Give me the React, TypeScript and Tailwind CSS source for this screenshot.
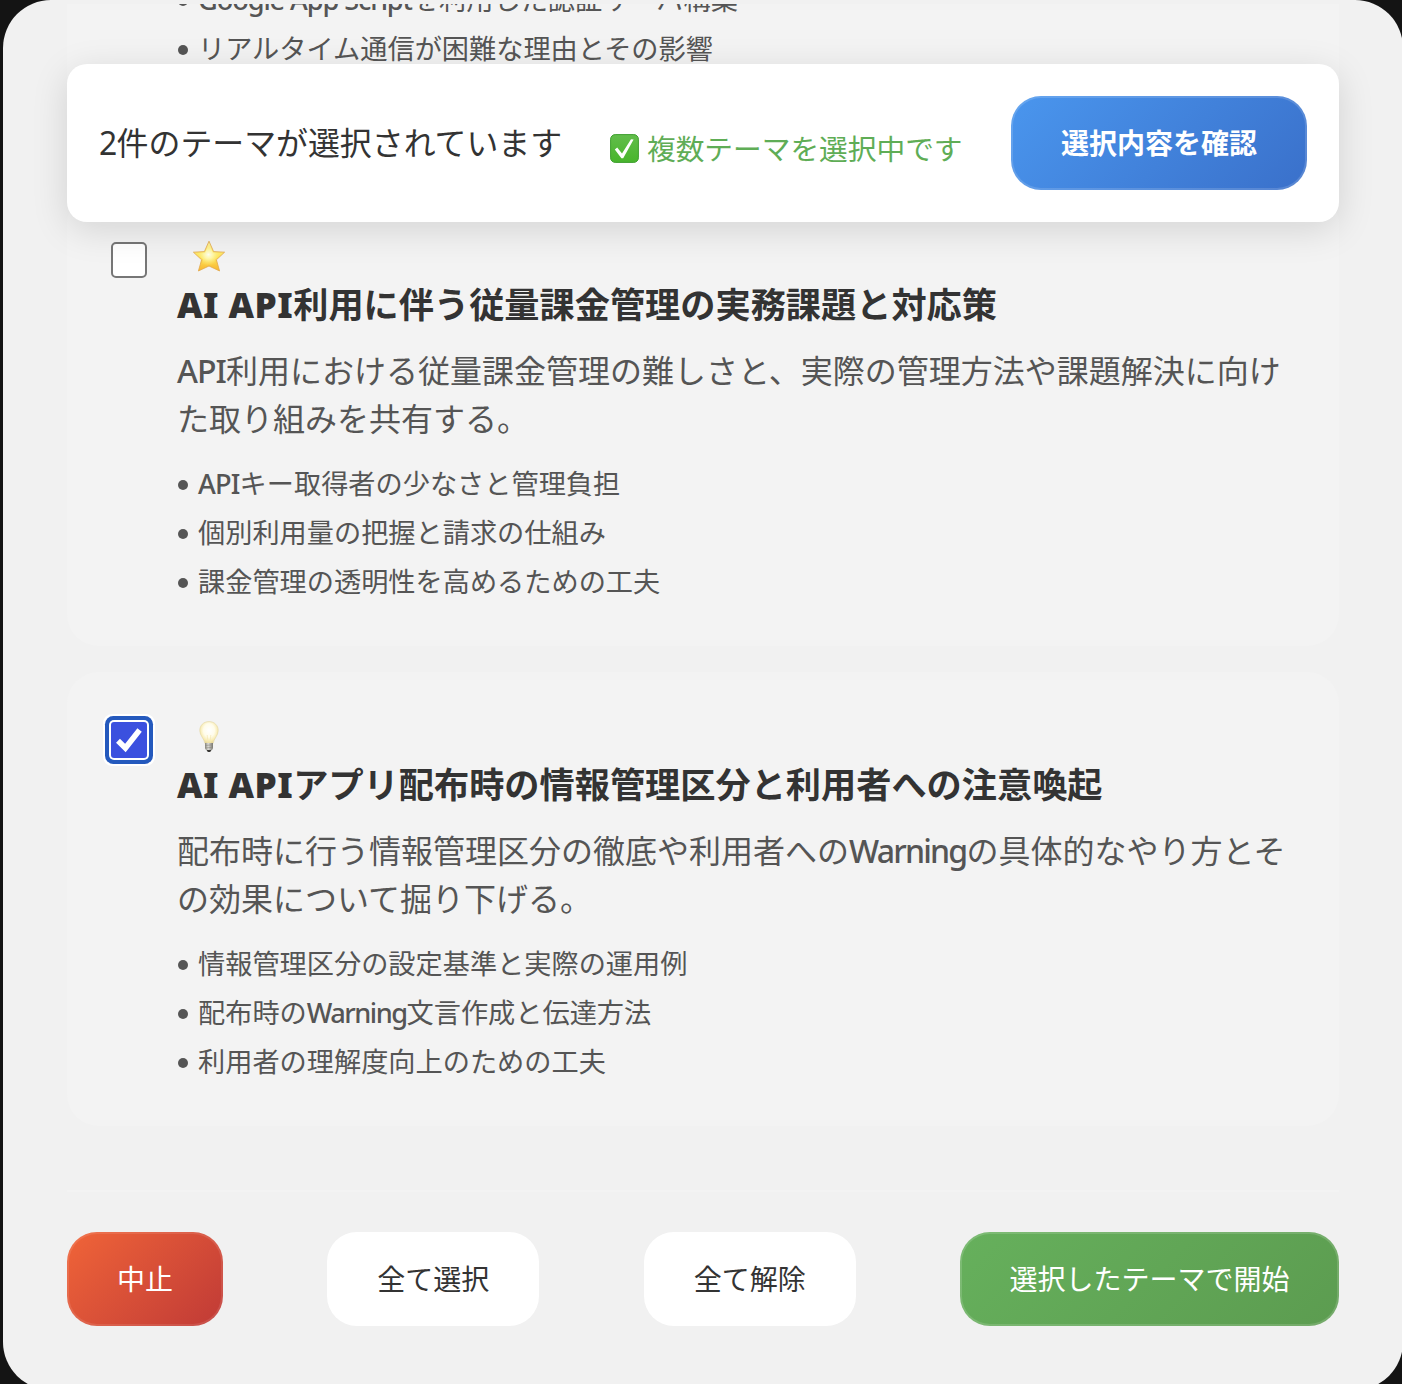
import type { ReactNode } from "react";

const FONT = "font-['Noto_Sans','Noto_Sans_CJK_JP',sans-serif]";

function latinClass(run: string, bold: boolean) {
  if (bold) return "font-black tracking-[0.013em]";
  if (run === "API") return "font-medium tracking-[-0.03em]";
  if (run === "Warning") return "font-medium tracking-[-0.056em]";
  return "font-medium tracking-[-0.041em]";
}

/* Splits a string so that Latin runs can carry their own weight and tracking. */
function Mixed({ text, bold = false }: { text: string; bold?: boolean }) {
  return (
    <>
      {text.split(/([A-Za-z][A-Za-z ]*)/).map((part, i) =>
        i % 2 === 1 ? (
          <span key={i} className={latinClass(part, bold)}>
            {part}
          </span>
        ) : (
          part
        ),
      )}
    </>
  );
}

function StarIcon() {
  return (
    <svg width="34" height="34" viewBox="0 0 34 34" className="block">
      <defs>
        <linearGradient id="star" x1="0" y1="0" x2="0" y2="1">
          <stop offset="0" stopColor="#fff3a0" />
          <stop offset="0.5" stopColor="#ffe65c" />
          <stop offset="1" stopColor="#f7b52e" />
        </linearGradient>
        <radialGradient id="starGlow" cx="0.48" cy="0.42" r="0.45">
          <stop offset="0" stopColor="#fffff0" />
          <stop offset="0.4" stopColor="#fffbb8" stopOpacity="0.8" />
          <stop offset="1" stopColor="#fff176" stopOpacity="0" />
        </radialGradient>
      </defs>
      <path d="M17 1.2 L21.6 11.6 L32.6 12.2 L24.4 19.8 L27.6 31 L17 26 L6.4 31 L9.6 19.8 L1.4 12.2 L12.4 11.6 Z" fill="url(#star)" stroke="#e2a84c" strokeWidth="0.8" strokeLinejoin="round" />
      <path d="M17 4 L20.8 12.6 L30 13.3 L23 19.6 L25.8 29 L17 24.8 L8.2 29 L11 19.6 L4 13.3 L13.2 12.6 Z" fill="url(#starGlow)" />
    </svg>
  );
}

function BulbIcon() {
  return (
    <svg width="34" height="34" viewBox="0 0 34 34" className="block">
      <defs>
        <radialGradient id="glass" cx="0.5" cy="0.4" r="0.6">
          <stop offset="0" stopColor="#ffffff" />
          <stop offset="0.5" stopColor="#fffcea" />
          <stop offset="0.8" stopColor="#f8ebb0" />
          <stop offset="1" stopColor="#e5d596" />
        </radialGradient>
        <linearGradient id="screw" x1="0" y1="0" x2="1" y2="0">
          <stop offset="0" stopColor="#85837a" />
          <stop offset="0.4" stopColor="#deddd7" />
          <stop offset="1" stopColor="#77756e" />
        </linearGradient>
      </defs>
      <path d="M17 1.6 C11.4 1.6 7.8 5.6 7.8 10.6 C7.8 15.6 12 18.2 13 23.6 H21 C22 18.2 26.2 15.6 26.2 10.6 C26.2 5.6 22.6 1.6 17 1.6 Z" fill="url(#glass)" stroke="#e4d8a9" strokeWidth="0.7" />
      <path d="M15.2 15 L16 23 M18.8 15 L18 23" stroke="#f3e6b4" strokeWidth="0.7" fill="none" />
      <path d="M13 23 H21 V28 Q20.5 30 19 30.5 H15 Q13.5 30 13 28 Z" fill="url(#screw)" />
      <path d="M13 25.5 L21 24.8 M13 28 L21 27.3" stroke="#8a887e" strokeWidth="0.6" />
      <path d="M14.6 30 H19.4 L18.2 32 H15.8 Z" fill="#393835" />
    </svg>
  );
}

function CheckEmoji() {
  return (
    <svg width="30" height="30" viewBox="0 0 30 30" className="block">
      <defs>
        <linearGradient id="green" x1="0" y1="0" x2="0" y2="1">
          <stop offset="0" stopColor="#62bd4b" />
          <stop offset="1" stopColor="#48b52c" />
        </linearGradient>
      </defs>
      <rect x="0.6" y="0.6" width="27.8" height="27.8" rx="4.6" fill="url(#green)" stroke="#3f9f30" strokeWidth="1" />
      <path d="M4.8 15.4 L7.2 13.4 L12 19.6 L21 5.2 L23.6 5.6 L13.2 24.2 H11.4 Z" fill="#fff" />
    </svg>
  );
}

function Checkbox({ checked }: { checked: boolean }) {
  if (!checked) {
    return <span className="block size-9 rounded-[5px] border-2 border-[#767676] bg-white" />;
  }
  return (
    <span className="block size-9 rounded-[3px] bg-[#3b50df] shadow-[0_0_0_2px_#fff,0_0_0_6px_#2459bd,0_0_0_8px_#fff]">
      <svg width="36" height="36" viewBox="0 0 36 36" className="block">
        <path d="M7 18.8 L14.4 26 L28.6 8" fill="none" stroke="#fff" strokeWidth="5.6" />
      </svg>
    </span>
  );
}

function Bullets({ items }: { items: string[] }) {
  return (
    <ul className="text-[27.2px] leading-[49px] text-[#555]">
      {items.map((item) => (
        <li key={item} className="flex h-[49px] items-center whitespace-nowrap">
          <span className="mt-[3px] mr-2.5 ml-px block size-[10px] rounded-full bg-[#555]" />
          <span>
            <Mixed text={item} />
          </span>
        </li>
      ))}
    </ul>
  );
}

type Theme = {
  checked: boolean;
  icon: ReactNode;
  title: string;
  lines: string[];
  items: string[];
};

function ThemeCard({ checked, icon, title, lines, items }: Theme) {
  return (
    <section className="flex h-[454px] rounded-[32px] bg-[#f3f3f3] pt-[46px] pl-11">
      <div className="mt-1 mr-[30px] w-9 shrink-0">
        <Checkbox checked={checked} />
      </div>
      <div className="min-w-0">
        <div className="ml-[15px] h-10 pt-0.5">{icon}</div>
        <h2 className="h-[52px] text-[35.2px] leading-[52px] font-bold whitespace-nowrap text-[#333]">
          <Mixed text={title} bold />
        </h2>
        <div className="mt-[17px] text-[32px] leading-[48px] whitespace-nowrap text-[#555]">
          {lines.map((line) => (
            <p key={line}>
              <Mixed text={line} />
            </p>
          ))}
        </div>
        <div className="mt-4">
          <Bullets items={items} />
        </div>
      </div>
    </section>
  );
}

const THEMES: Theme[] = [
  {
    checked: false,
    icon: <StarIcon />,
    title: "AI API利用に伴う従量課金管理の実務課題と対応策",
    lines: ["API利用における従量課金管理の難しさと、実際の管理方法や課題解決に向け", "た取り組みを共有する。"],
    items: ["APIキー取得者の少なさと管理負担", "個別利用量の把握と請求の仕組み", "課金管理の透明性を高めるための工夫"],
  },
  {
    checked: true,
    icon: <BulbIcon />,
    title: "AI APIアプリ配布時の情報管理区分と利用者への注意喚起",
    lines: ["配布時に行う情報管理区分の徹底や利用者へのWarningの具体的なやり方とそ", "の効果について掘り下げる。"],
    items: ["情報管理区分の設定基準と実際の運用例", "配布時のWarning文言作成と伝達方法", "利用者の理解度向上のための工夫"],
  },
];

export default function App() {
  return (
    <div lang="ja" className={`h-[1384px] w-[1402px] overflow-hidden bg-[#141414] ${FONT}`}>
      <main className="relative ml-[3px] h-[1390px] w-[1400px] overflow-hidden rounded-[48px] bg-[#f1f1f1] px-16 pt-1">
        <div className="flex h-[164px] flex-col justify-end overflow-hidden rounded-b-[32px] bg-[#f3f3f3] pb-[95px] pl-[110px]">
          <Bullets items={["Google App Scriptを利用した認証サーバ構築", "リアルタイム通信が困難な理由とその影響"]} />
        </div>
        <div className="mt-6 flex flex-col gap-[26px]">
          {THEMES.map((theme) => (
            <ThemeCard key={theme.title} {...theme} />
          ))}
        </div>

        <footer className="mt-16 flex justify-between border-t-2 border-[#f3f3f3] pt-10 text-[28px] text-[#333]">
          <button className="h-[94px] w-[156px] rounded-[30px] border-2 border-white/10 bg-linear-135 from-[#f06438] to-[#c03a36] bg-origin-border text-white">
            中止
          </button>
          <button className="h-[94px] w-[212px] rounded-[30px] bg-white">全て選択</button>
          <button className="h-[94px] w-[212px] rounded-[30px] bg-white">全て解除</button>
          <button className="h-[94px] w-[379px] rounded-[30px] border-2 border-white/15 bg-linear-135 from-[#66b05c] to-[#5c9c50] bg-origin-border text-white">
            選択したテーマで開始
          </button>
        </footer>

        <header className="absolute top-16 left-16 flex h-[158px] w-[1272px] items-center rounded-[20px] bg-white pr-8 pl-8 shadow-[0_8px_36px_rgba(0,0,0,0.13)]">
          <p className="w-[511px] text-[31.9px] whitespace-nowrap text-[#333]">
            <span className="tracking-[-0.02em]">2</span>件のテーマが選択されています
          </p>
          <p className="mt-[13px] flex items-center text-[28.7px] whitespace-nowrap text-[#5fad56]">
            <CheckEmoji />
            <span className="-mt-0.5 ml-[7px]">複数テーマを選択中です</span>
          </p>
          <button className="ml-auto h-[94px] w-[296px] rounded-[30px] border-2 border-white/15 bg-linear-135 from-[#4a96ee] to-[#3a70ca] bg-origin-border text-[28px] font-bold text-white">
            選択内容を確認
          </button>
        </header>
      </main>
    </div>
  );
}
